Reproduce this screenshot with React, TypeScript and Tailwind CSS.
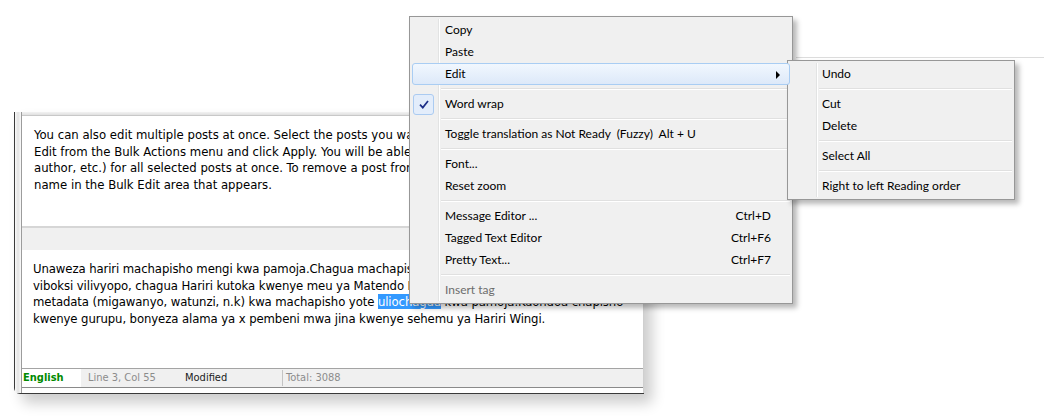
import React from 'react';

const editorFont = "font-[family-name:'DejaVu_Sans_Condensed','DejaVu_Sans',sans-serif]";
const menuFont = "font-[family-name:Lato,'Liberation_Sans',sans-serif]";

function MenuItem({
  label,
  shortcut,
  submenu,
  active,
  checked,
  disabled,
  pl = 'pl-[32px]',
}: {
  label: string;
  shortcut?: string;
  submenu?: boolean;
  active?: boolean;
  checked?: boolean;
  disabled?: boolean;
  pl?: string;
}) {
  return (
    <div
      className={`relative z-10 h-[22px] flex items-center ${pl} pr-[18px] rounded-[3px] border ${
        active
          ? 'border-[#a9cdf3] bg-gradient-to-b from-[#f1f7fe] to-[#dde9f9]'
          : 'border-transparent'
      }`}
    >
      {checked && (
        <div className="absolute left-0 top-[0px] w-[21px] h-[21px] rounded-[3px] border border-[#abcbf1] bg-[#e3edfb] flex items-center justify-center">
          <svg width="10" height="9" viewBox="0 0 10 9">
            <path d="M1 4.6 L3.8 7.6 L9 1" fill="none" stroke="#1d2f88" strokeWidth="1.7" />
          </svg>
        </div>
      )}
      <span className={`flex-1 whitespace-pre ${disabled ? 'text-[#6d6d6d]' : 'text-black'}`}>{label}</span>
      {shortcut && <span className="text-black">{shortcut}</span>}
      {submenu && (
        <svg className="absolute right-[8px] top-[7px]" width="5" height="8" viewBox="0 0 5 8">
          <path d="M0 0 L4 4 L0 8 Z" fill="#000" />
        </svg>
      )}
    </div>
  );
}

function Sep({ ml = 'ml-[29px]' }: { ml?: string }) {
  return (
    <div className={`h-[8px] flex flex-col justify-center ${ml}`}>
      <div className="h-px bg-[#e0e0e0]" />
      <div className="h-px bg-white" />
    </div>
  );
}

function Menu({ className, children }: { className: string; children: React.ReactNode }) {
  return (
    <div
      className={`absolute bg-[#f0f0f0] border border-[#979797] p-[2px] text-[12px] shadow-[4px_4px_5px_rgba(0,0,0,0.28)] ${menuFont} ${className}`}
    >
      <div className="absolute top-[2px] bottom-[2px] left-[28px] w-[2px] border-l border-[#e2e3e3] border-r border-r-white" />
      {children}
    </div>
  );
}

export default function App() {
  return (
    <div className="relative w-[1044px] h-[419px] bg-white overflow-hidden pt-[112px] pl-[14px]">
      {/* window behind the submenu */}
      <div className="absolute left-[796px] top-[57px] w-[260px] h-px bg-[#dcdcdc]" />

      {/* editor window */}
      <div className="flex w-[630px] h-[282px] bg-white border-l border-b border-[#3a3a3a] rounded-bl-[6px] shadow-[8px_9px_14px_rgba(0,0,0,0.2)]">
        <div className="w-[6px] shrink-0 bg-gradient-to-r from-[#fafafa] via-[#e2e2e2] to-[#fafafa]" />
        <div className="flex-1 min-w-0 flex flex-col border-l border-[#9c9c9c] border-r border-r-[#cfcfcf]">
          <div className="h-[4px] bg-gradient-to-b from-[#f2f2f2] to-[#e0e0e0] border-b border-[#c8c8c8]" />
          <div className={`h-[110px] overflow-hidden pl-[12px] pt-[11px] text-[13px] leading-[16.5px] text-black ${editorFont}`}>
            <div className="whitespace-nowrap">You can also edit multiple posts at once. Select the posts you want to edit using the checkboxes, then select Bulk</div>
            <div className="whitespace-nowrap">Edit from the Bulk Actions menu and click Apply. You will be able to change the metadata (categories,</div>
            <div className="whitespace-nowrap">author, etc.) for all selected posts at once. To remove a post from the grouping, just click the x next to its</div>
            <div className="whitespace-nowrap">name in the Bulk Edit area that appears.</div>
          </div>
          <div className="h-[2px] bg-[#d6d6d6]" />
          <div className="h-[22px] bg-[#f0f0f0]" />
          <div className={`h-[118px] overflow-hidden pl-[11px] pt-[11px] text-[13px] leading-[16.5px] tracking-[-0.1px] text-black ${editorFont}`}>
            <div className="whitespace-nowrap">Unaweza hariri machapisho mengi kwa pamoja.Chagua machapisho unayotaka kuhariri kwa kutumia</div>
            <div className="whitespace-nowrap">viboksi vilivyopo, chagua Hariri kutoka kwenye meu ya Matendo Makubwa na bonyeza Tekeleza.</div>
            <div className="whitespace-nowrap">
              metadata (migawanyo, watunzi, n.k) kwa machapisho yote <span className="bg-[#3399ff] text-white">uliochagua</span> kwa pamoja.Kuondoa chapisho
            </div>
            <div className="whitespace-nowrap">kwenye gurupu, bonyeza alama ya x pembeni mwa jina kwenye sehemu ya Hariri Wingi.</div>
          </div>
          <div className={`h-[20px] flex items-stretch border-t border-[#a4a4a4] border-b border-b-[#8a8a8a] bg-[#f0f0f0] text-[11px] ${editorFont}`}>
            <div className="w-[59px] bg-white pl-[1px] flex items-center font-bold text-[#008a00]">English</div>
            <div className="w-[97px] pl-[7px] flex items-center text-[#8c8c8c]">Line 3, Col 55</div>
            <div className="w-[104px] pl-[7px] flex items-center text-[#202020]">Modified</div>
            <div className="w-px bg-[#c4c4c4] my-[1px]" />
            <div className="pl-[3px] flex items-center text-[#8c8c8c]">Total: 3088</div>
          </div>
          <div className="flex-1 bg-white" />
        </div>
      </div>

      {/* context menu */}
      <Menu className="left-[409px] top-[16px] w-[384px]">
        <MenuItem label="Copy" />
        <MenuItem label="Paste" />
        <MenuItem label="Edit" submenu active />
        <Sep />
        <MenuItem label="Word wrap" checked />
        <Sep />
        <MenuItem label="Toggle translation as Not Ready  (Fuzzy)  Alt + U" />
        <Sep />
        <MenuItem label="Font..." />
        <MenuItem label="Reset zoom" />
        <Sep />
        <MenuItem label="Message Editor ..." shortcut="Ctrl+D" />
        <MenuItem label="Tagged Text Editor" shortcut="Ctrl+F6" />
        <MenuItem label="Pretty Text..." shortcut="Ctrl+F7" />
        <Sep />
        <MenuItem label="Insert tag" disabled />
      </Menu>

      {/* Edit submenu */}
      <Menu className="left-[787px] top-[60px] w-[228px]">
        <MenuItem label="Undo" pl="pl-[31px]" />
        <Sep />
        <MenuItem label="Cut" pl="pl-[31px]" />
        <MenuItem label="Delete" pl="pl-[31px]" />
        <Sep />
        <MenuItem label="Select All" pl="pl-[31px]" />
        <Sep />
        <MenuItem label="Right to left Reading order" pl="pl-[31px]" />
      </Menu>
    </div>
  );
}
